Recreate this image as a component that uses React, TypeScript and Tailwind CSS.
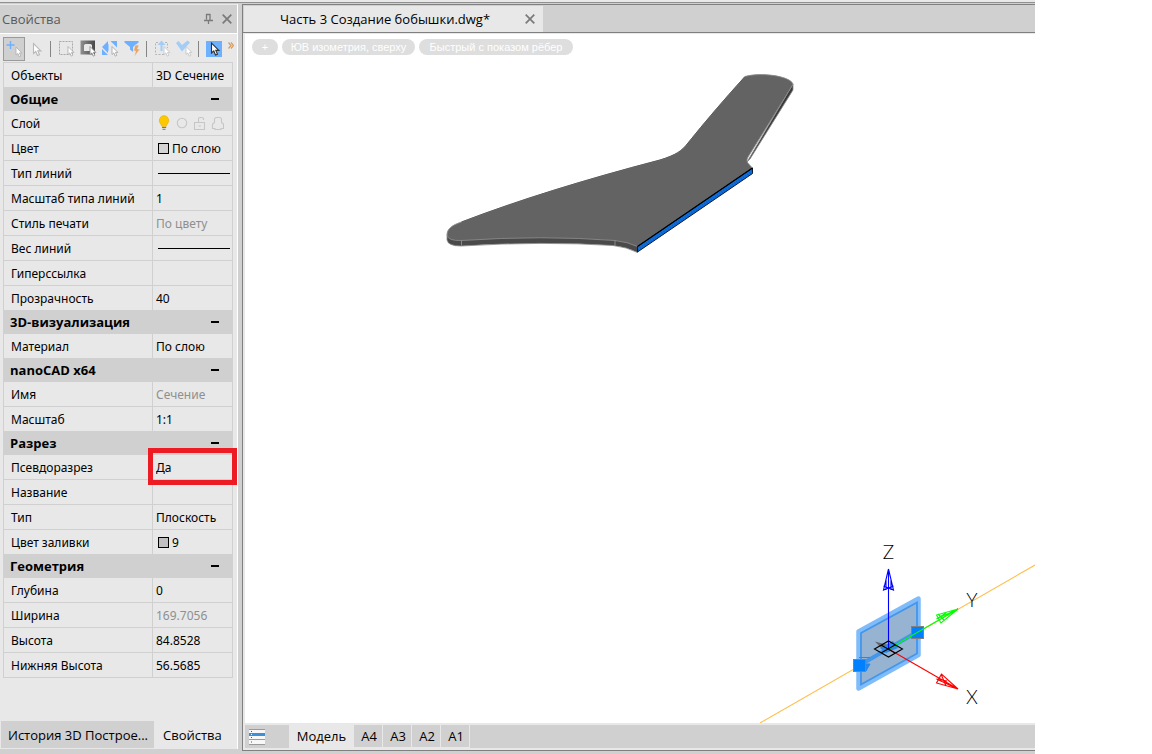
import React, { useState } from 'react';
import clsx from 'clsx';

type Kind = 'text' | 'muted' | 'static' | 'line' | 'color' | 'layer';

interface Prop {
  label: string;
  value?: string;
  kind?: Kind;
  swatch?: string;
  marked?: boolean;
}

interface Group {
  title: string;
  props: Prop[];
}

const GROUPS: Group[] = [
  {
    title: 'Общие',
    props: [
      { label: 'Слой', kind: 'layer' },
      { label: 'Цвет', value: 'По слою', kind: 'color', swatch: 'bg-[#d4d4d4]' },
      { label: 'Тип линий', kind: 'line' },
      { label: 'Масштаб типа линий', value: '1' },
      { label: 'Стиль печати', value: 'По цвету', kind: 'muted' },
      { label: 'Вес линий', kind: 'line' },
      { label: 'Гиперссылка', value: '' },
      { label: 'Прозрачность', value: '40' }
    ]
  },
  { title: '3D-визуализация', props: [{ label: 'Материал', value: 'По слою' }] },
  {
    title: 'nanoCAD x64',
    props: [
      { label: 'Имя', value: 'Сечение', kind: 'muted' },
      { label: 'Масштаб', value: '1:1' }
    ]
  },
  {
    title: 'Разрез',
    props: [
      { label: 'Псевдоразрез', value: 'Да', marked: true },
      { label: 'Название', value: '' },
      { label: 'Тип', value: 'Плоскость' },
      { label: 'Цвет заливки', value: '9', kind: 'color', swatch: 'bg-[#c0c0c0]' }
    ]
  },
  {
    title: 'Геометрия',
    props: [
      { label: 'Глубина', value: '0' },
      { label: 'Ширина', value: '169.7056', kind: 'muted' },
      { label: 'Высота', value: '84.8528' },
      { label: 'Нижняя Высота', value: '56.5685' }
    ]
  }
];

const SHEETS = ['A4', 'A3', 'A2', 'A1'];

const CURSOR = 'M0 0 V10 L2.3 8 L4 12 L6 11.2 L4.3 7.4 H7.4 Z';

const Cursor = ({ x, y, size = 0.8, stroke = '#a8a8a8' }: { x: number; y: number; size?: number; stroke?: string }) => (
  <path d={CURSOR} transform={`translate(${x} ${y}) scale(${size})`} fill="#fff" stroke={stroke} strokeWidth="1.1" />
);

const ToolIcon = ({ children }: { children: React.ReactNode }) => (
  <svg width="18" height="18" viewBox="0 0 18 18" className="block shrink-0">
    {children}
  </svg>
);

const ToolButton = ({ title, className, children }: { title: string; className?: string; children: React.ReactNode }) => (
  <button title={title} aria-label={title} className={clsx('flex shrink-0 items-center justify-center', className)}>
    {children}
  </button>
);

const Separator = () => <span className="mr-[3px] h-4 w-px shrink-0 bg-[#858585]" />;

const Cross = () => (
  <svg width="10" height="10" viewBox="0 0 10 10" className="block">
    <path d="M0.7 0.7 L9.3 9.3 M9.3 0.7 L0.7 9.3" stroke="#7a7a7a" strokeWidth="1.7" />
  </svg>
);

const Toolbar = () => (
  <div className="flex h-[28px] items-center gap-1 pt-[2px] pl-[3px]">
    <ToolButton title="Добавить к выбору" className="h-[24px] w-[22px] border border-[#9a9a9a] bg-[#d0d0d0]">
      <ToolIcon>
        <path d="M5.5 1 V9 M1.5 5 H9.5" stroke="#6cb0ff" strokeWidth="1.4" />
        <Cursor x={11} y={7} stroke="#b0b0b0" />
      </ToolIcon>
    </ToolButton>
    <ToolButton title="Выбор" className="w-[17px]">
      <ToolIcon>
        <Cursor x={4.5} y={3.5} size={1} stroke="#b8b8b8" />
      </ToolIcon>
    </ToolButton>
    <Separator />
    <ToolButton title="Выбор рамкой">
      <ToolIcon>
        <rect x="1.5" y="1.5" width="13" height="13" fill="none" stroke="#a8a8a8" strokeDasharray="2 1" />
        <Cursor x={10} y={6.5} stroke="#b0b0b0" />
      </ToolIcon>
    </ToolButton>
    <ToolButton title="Инвертировать выбор">
      <ToolIcon>
        <defs>
          <linearGradient id="invert" x1="0" y1="0" x2="1" y2="0">
            <stop offset="0" stopColor="#909090" />
            <stop offset="1" stopColor="#484848" />
          </linearGradient>
        </defs>
        <path d="M0.5 0.5 H15 V14.5 H0.5 Z M4 5 V11 H12 V5 L10.5 4 H5.5 Z" fill="url(#invert)" fillRule="evenodd" />
        <Cursor x={10} y={6.5} stroke="#909090" />
      </ToolIcon>
    </ToolButton>
    <ToolButton title="Выбрать подобные">
      <ToolIcon>
        <path d="M0 7 L6 1 V4.5 L3.5 7 L6 10 V13 Z M8.5 1 H15 V7.5 Z M0 9 V15 H6 Z M6.5 4 V11 L3 7 Z" fill="#6cb0ff" />
        <Cursor x={10} y={6.5} />
      </ToolIcon>
    </ToolButton>
    <ToolButton title="Быстрый выбор">
      <ToolIcon>
        <path d="M0.5 1 H14.5 V2.5 L9 7 V12 L6 9.5 V7 L0.5 2.5 Z" fill="#6cb0ff" />
        <path d="M11 5 H15 L13.5 9 H16 L10.5 16.5 L11.5 11 H9.5 Z" fill="#e8a567" stroke="#e8e8e8" strokeWidth="0.6" />
      </ToolIcon>
    </ToolButton>
    <Separator />
    <ToolButton title="Изменить порядок">
      <ToolIcon>
        <path d="M4 2.5 H1.5 V14.5 H10 M11 2.5 H13.5 V8" fill="none" stroke="#b5b5b5" strokeDasharray="2 1.5" />
        <path d="M7.5 11 V3" fill="none" stroke="#a3ccf7" strokeWidth="2" />
        <path d="M3.5 5 L7.5 0.5 L11.5 5 Z" fill="#a3ccf7" />
        <Cursor x={10} y={6.5} stroke="#c6c6c6" />
      </ToolIcon>
    </ToolButton>
    <ToolButton title="Подтвердить выбор">
      <ToolIcon>
        <path d="M0 3 L2.5 1 L6 5 L11.5 0.5 L14 2.5 L6 11.5 Z" fill="#a3ccf7" />
        <Cursor x={10} y={6.5} stroke="#c6c6c6" />
      </ToolIcon>
    </ToolButton>
    <Separator />
    <ToolButton title="Режим выбора" className="h-4 w-4 bg-[#6cb0ff]">
      <svg width="16" height="16" viewBox="0 0 16 16" className="block">
        <Cursor x={5.5} y={2} size={1} stroke="#333" />
      </svg>
    </ToolButton>
    <ToolButton title="Ещё" className="mb-2 ml-[2px]">
      <svg width="6" height="7" viewBox="0 0 6 7" className="block">
        <path d="M0.5 0.5 L3 3.5 L0.5 6.5 M3 0.5 L5.5 3.5 L3 6.5" fill="none" stroke="#d79a5e" strokeWidth="1.2" />
      </svg>
    </ToolButton>
  </div>
);

const LayerIcons = () => (
  <svg width="70" height="18" viewBox="0 0 70 18" className="ml-[3px] block">
    <path d="M8 1.5 a5 5 0 0 1 3.3 8.5 L10 12.5 H6 L4.7 10 A5 5 0 0 1 8 1.5 Z" fill="#fdc800" stroke="#e0a800" strokeWidth="0.5" />
    <path d="M6 13.5 H10.2 M6.5 15.3 H9.5" stroke="#777" strokeWidth="1" />
    <g fill="none" stroke="#c6c6c6" strokeWidth="1.1">
      <circle cx="26" cy="9" r="4.7" />
      <path d="M38.5 8.5 H48.5 V15.5 H38.5 Z M42.5 12 H45 M42.5 8.5 V5 Q42.5 3.5 44 3.5 H46 Q47.5 3.5 47.5 5 V6" />
      <path d="M58.5 8.5 V5.5 Q58.5 3.5 60.5 3.5 H63.5 Q65.5 3.5 65.5 5.5 V8.5 L67.5 10 V14.5 H65 V15.5 H59 V14.5 H56.5 V10 Z" />
    </g>
  </svg>
);

const PropValue = ({ prop }: { prop: Prop }) => {
  if (prop.kind === 'layer') return <LayerIcons />;
  if (prop.kind === 'line') return <div className="mr-[2px] ml-[5px] h-px bg-black" />;
  if (prop.kind === 'static') return <span className="block pt-[2px] pl-[3px] whitespace-nowrap">{prop.value}</span>;
  return (
    <div className="flex items-center">
      {prop.kind === 'color' && <span className={clsx('ml-[5px] h-[11px] w-[11px] shrink-0 border border-black', prop.swatch)} />}
      <input
        aria-label={prop.label}
        defaultValue={prop.value}
        disabled={prop.kind === 'muted'}
        className="h-5 w-full min-w-0 bg-transparent pl-[3px] outline-none disabled:text-[#8f8f8f]"
      />
    </div>
  );
};

const PropRow = ({ prop }: { prop: Prop }) => (
  <tr className="h-[25px]">
    <th scope="row" className="w-[149px] border-t border-r border-[#d0d0d0] p-0 pt-[2px] pl-[7px] text-left font-normal whitespace-nowrap">
      {prop.label}
    </th>
    <td className="relative border-t border-[#d0d0d0] p-0">
      <PropValue prop={prop} />
      {prop.marked && <span className="pointer-events-none absolute -inset-x-[5px] -top-[7px] -bottom-[6px] z-10 border-5 border-[#ed1c24]" />}
    </td>
  </tr>
);

const PropertyGrid = () => {
  const [closed, setClosed] = useState<string[]>([]);
  const toggle = (title: string) => setClosed((c) => (c.includes(title) ? c.filter((t) => t !== title) : [...c, title]));

  return (
    <table className="mr-[4px] ml-[3px] w-[230px] table-fixed border-separate border-spacing-0 border-x border-b border-[#d0d0d0] font-['Noto_Sans',sans-serif] text-[12px] leading-4 text-black">
      <tbody>
        <PropRow prop={{ label: 'Объекты', value: '3D Сечение', kind: 'static' }} />
      </tbody>
      {GROUPS.map((group) => (
        <tbody key={group.title}>
          <tr className="h-[23px] bg-[#d0d0d0]">
            <th colSpan={2} className="p-0 text-left">
              <button
                onClick={() => toggle(group.title)}
                aria-expanded={!closed.includes(group.title)}
                className="flex w-full items-center justify-between pr-[13px] pl-[6px] font-['Open_Sans','Noto_Sans',sans-serif] text-[13px] leading-5 font-bold"
              >
                {group.title}
                <span className="h-[2px] w-2 bg-black" />
              </button>
            </th>
          </tr>
          {!closed.includes(group.title) && group.props.map((prop) => <PropRow key={prop.label} prop={prop} />)}
        </tbody>
      ))}
    </table>
  );
};

const PropertiesPanel = () => (
  <aside className="flex w-[238px] shrink-0 flex-col pb-[2px]">
    <div className="flex flex-1 flex-col border-t border-r border-t-[#e8e8e8] border-r-white bg-[#e8e8e8]">
      <div className="flex h-[29px] items-center border-b border-white bg-[#d0d0d0] pr-[5px] pl-[2px]">
        <h2 className="flex-1 text-[13px] leading-5 text-[#5a5a5a]">Свойства</h2>
        <button aria-label="Закрепить" className="mr-2">
          <svg width="11" height="12" viewBox="0 0 11 12" className="block">
            <path d="M3.5 1 V6.5 M3 1.5 H7.5 M7 1 V7 M1 7.5 H10 M5.5 7.5 V11" fill="none" stroke="#7a7a7a" strokeWidth="1.3" />
          </svg>
        </button>
        <button aria-label="Закрыть">
          <Cross />
        </button>
      </div>
      <Toolbar />
      <PropertyGrid />
      <div className="mt-auto flex h-[28px] pb-px pl-px text-[13px] leading-5">
        <button className="w-[153px] bg-[#d0d0d0] pl-[7px] text-left whitespace-nowrap">История 3D Построе...</button>
        <button className="flex-1 pl-[9px] text-left">Свойства</button>
      </div>
    </div>
  </aside>
);

const Scene = () => (
  <svg viewBox="245 34 790 689" className="absolute inset-0 h-full w-full">
    {/* blade */}
    <path
      d="M447 235 V240 Q448 246 461 246 Q543 241 613 245.5 Q627 247 637.5 252.5 V246 L615 236 H461 Z"
      fill="#4a4a4a"
      stroke="#8a8a8a"
      strokeWidth="0.8"
    />
    <path d="M793 84 V90 L750 159 L747 162 Z" fill="#3a3a3a" stroke="#8a8a8a" strokeWidth="0.8" />
    <path
      d="M447 235 C447 229 452 225 461.5 222 Q545 190 660 160 C676 155 682 151 688 143 Q712 113 745 76.5 C761 72 790 76 793 84 Q791 88 748 157 C745 163 749 163 752.5 168.5 L637.5 246.5 Q628 242 615 240.5 Q543 235 461.5 240.5 Q448 241 447 235 Z"
      fill="#636363"
      stroke="#8a8a8a"
      strokeWidth="0.9"
    />
    <path d="M461.5 222 Q545 190 660 160 C676 155 682 151 688 143 Q712 113 745 76.5" fill="none" stroke="#4d4d4d" strokeWidth="0.8" />
    <path d="M461.5 240.5 V245.5 M615 240.5 V245.5" stroke="#999" strokeWidth="0.8" />
    <path d="M752.5 168 V173.5 L637.5 252 V246.5 Z" fill="#0f6fe0" stroke="#0a1a30" strokeWidth="1" />
    <path d="M752.5 171.5 L637.5 250" stroke="#06397a" strokeWidth="3" strokeDasharray="0.8 1.8" opacity="0.35" />
    <path d="M752.5 168 L637.5 246.5" stroke="#000" strokeWidth="1.2" />

    {/* section plane */}
    <path d="M760 723 L1035 565" stroke="#ffbf4d" strokeWidth="1.1" />
    <path d="M858.5 631.5 L918.5 598.5 V655 L858.5 688.5 Z" fill="#96b4d2" stroke="#80bcfa" strokeWidth="4.5" strokeLinejoin="round" />
    <path d="M861 633 L917 602.5 V653.5 L861 684.5 Z" fill="none" stroke="#4396ea" strokeWidth="1.8" />
    <path d="M860 665 L917 632" stroke="#4396ea" strokeWidth="4" />
    <path d="M859 657.5 H870 M865 664 H870 L866 671 Z" stroke="#2b87ea" fill="#2b87ea" strokeWidth="1" />
    <path d="M875 641.5 L888 645 L883 650 Z" fill="#666" />
    <path d="M880 648 L893 641 L898 648 L886 653 Z" fill="#2b87ea" />
    <g stroke="#808080" fill="#0080ff">
      <rect x="853.5" y="659.5" width="12" height="12" />
      <rect x="911.5" y="626.5" width="12" height="12" />
    </g>

    {/* axes */}
    <g fill="none" strokeWidth="1.1">
      <path d="M888.5 649 V569 M888.5 569 L883.5 590 L893.5 586 M888.5 569 L893.5 590 L883.5 586 M886 580 V590 M891 580 V590" stroke="#00f" />
      <path d="M888.5 649 L958 609 M958 609 L936.5 615 L941 623 Z M936.5 619 L958 609 M938 614 L944 620 M936.5 619 L946 613" stroke="#0f0" />
      <path d="M888.5 649 L958 689 M958 689 L941.5 674 L936.5 683 Z M936.5 679 L958 689 M941 674 L946 686 M936.5 679 L947 681" stroke="#f00" />
      <path d="M874.5 649 L888.5 641 L902.5 649 L888.5 657 Z M881 645 L895 653 M895 645 L881 653" stroke="#000" />
    </g>
    <g className="font-['Lato',sans-serif] text-[19px] font-light" textAnchor="middle" fill="#000">
      <text x="888.5" y="559">Z</text>
      <text x="972" y="607">Y</text>
      <text x="972" y="704">X</text>
    </g>
  </svg>
);

const ViewChip = ({ label, className }: { label: string; className: string }) => (
  <button className={clsx('h-4 rounded-full bg-[#dedede] text-center text-[11px] leading-4 whitespace-nowrap text-white', className)}>{label}</button>
);

const Drawing = () => (
  <main className="flex min-w-0 flex-1 flex-col border-y border-l border-[#808080] bg-[#e8e8e8]">
    <div className="flex h-[28px] border-b border-[#808080] bg-[#d0d0d0] pt-px pl-px">
      <div className="flex w-[299px] items-center bg-[#e8e8e8] pl-[36px]">
        <span className="flex-1 text-[13px] leading-5 whitespace-nowrap">Часть 3 Создание бобышки.dwg*</span>
        <button aria-label="Закрыть вкладку" className="mr-2">
          <Cross />
        </button>
      </div>
    </div>
    <div className="relative mt-px mb-[2px] ml-[2px] flex-1 bg-white">
      <Scene />
      <div className="absolute top-[5px] left-[7px] flex gap-1 font-['Liberation_Sans',sans-serif]">
        <ViewChip label="+" className="w-[26px]" />
        <ViewChip label="ЮВ изометрия, сверху" className="w-[133px]" />
        <ViewChip label="Быстрый с показом рёбер" className="w-[154px]" />
      </div>
    </div>
    <div className="mb-[2px] ml-[2px] flex h-[23px] bg-[#d0d0d0] text-[13px] leading-5">
      <button aria-label="Список листов" className="flex w-[44px] items-center pl-[4px]">
        <svg width="16" height="16" viewBox="0 0 16 16" className="block">
          <rect width="16" height="16" fill="#f7f7f7" />
          <path d="M0 5.5 H16" stroke="#3f8fd6" strokeWidth="3" />
          <path d="M0 0.5 H16 M0 10.5 H16 M0 15.5 H16" stroke="#9a9a9a" />
          <path d="M2 2.5 H3 M2 8.5 H3 M2 13 H3" stroke="#555" />
          <path d="M2 5.5 H3" stroke="#fff" />
        </svg>
      </button>
      <button className="w-[65px] bg-[#e8e8e8] pb-[2px]">Модель</button>
      {SHEETS.map((sheet) => (
        <button key={sheet} className="w-[29px] border-r border-b border-[#e8e8e8] pb-px pl-[2px]">
          {sheet}
        </button>
      ))}
    </div>
  </main>
);

export default function App() {
  return (
    <div className="flex min-h-screen bg-white pr-[117px] font-['Open_Sans','Noto_Sans',sans-serif] text-black">
      <div className="flex min-w-0 flex-1 flex-col bg-[#d0d0d0]">
        <div className="h-[3px] border-b border-[#909090] bg-[#e8e8e8]" />
        <div className="flex flex-1 gap-1 pt-px pb-[3px]">
          <PropertiesPanel />
          <Drawing />
        </div>
      </div>
    </div>
  );
}
